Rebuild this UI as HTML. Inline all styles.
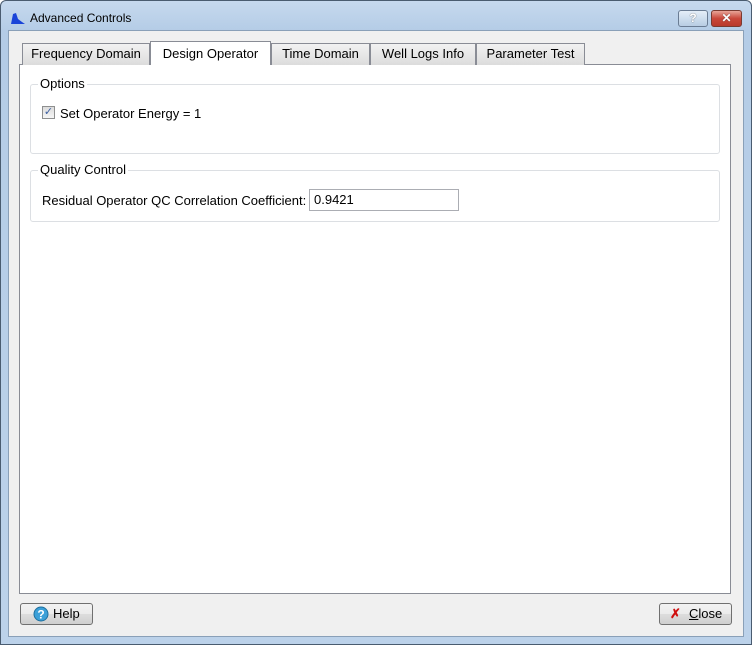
<!DOCTYPE html><html><head><style>
*{margin:0;padding:0;box-sizing:border-box}
body{width:752px;height:645px;overflow:hidden;font-family:"Liberation Sans",sans-serif;font-size:13px;color:#000;background:#fff}
.a{position:absolute}
.win{left:0;top:0;width:752px;height:645px;border:1px solid #4a5c70;border-radius:6px 6px 0 0;background:linear-gradient(#c6d9ee,#b4cce6 30px,#bcd2ea);}
.client{left:8px;top:30px;width:736px;height:607px;background:#f0f0f0;border:1px solid #8aa0b8}
.tab{top:43px;height:22px;background:linear-gradient(#f2f2f2,#dcdcdc);border:1px solid #898c95;border-bottom:none;text-align:center;line-height:20px}
.pane{left:19px;top:64px;width:712px;height:530px;background:#fff;border:1px solid #898c95}
.grp{border:1px solid #dcdfe3;border-radius:3px}
.lg{background:#fff;padding:0 2px}
.btn{height:22px;border:1px solid #707070;border-radius:3px;background:linear-gradient(#f2f2f2,#ebebeb 50%,#dddddd 51%,#cfcfcf);line-height:20px}
</style></head><body>
<div class="a win"></div>
<svg class="a" style="left:10px;top:11px" width="16" height="14"><path d="M1 13 L3 3 L6 2 L8 8 L12 11 L15 13Z" fill="#1a44d8"/></svg>
<div class="a" style="left:30px;top:11px;font-size:12px">Advanced Controls</div>
<div class="a" style="left:678px;top:10px;width:30px;height:17px;border:1px solid #6a7c93;border-radius:3px;background:linear-gradient(#e4eef8,#b8cde3);text-align:center;font-size:12px;font-weight:bold;color:#fff;line-height:15px;text-shadow:0 0 1px #333">?</div>
<div class="a" style="left:711px;top:10px;width:31px;height:17px;border:1px solid #7a3a30;border-radius:3px;background:linear-gradient(#e8a598,#c9473a 50%,#b83a2c);text-align:center;font-size:12px;font-weight:bold;color:#fff;line-height:15px;text-shadow:0 0 1px #333">✕</div>
<div class="a client"></div>
<div class="a pane"></div>
<div class="a tab" style="left:22px;width:128px">Frequency Domain</div>
<div class="a tab" style="left:150px;top:41px;height:24px;width:121px;background:#fff;line-height:24px">Design Operator</div>
<div class="a tab" style="left:271px;width:99px">Time Domain</div>
<div class="a tab" style="left:370px;width:106px">Well Logs Info</div>
<div class="a tab" style="left:476px;width:109px">Parameter Test</div>
<div class="a grp" style="left:30px;top:84px;width:690px;height:70px"></div>
<div class="a lg" style="left:38px;top:76px">Options</div>
<div class="a" style="left:42px;top:106px;width:13px;height:13px;border:1px solid #8e8f8f;background:linear-gradient(#dcdcdc,#f6f6f6);font-size:11px;line-height:11px;text-align:center;color:#3c5fa0">✓</div>
<div class="a" style="left:60px;top:106px">Set Operator Energy = 1</div>
<div class="a grp" style="left:30px;top:170px;width:690px;height:52px"></div>
<div class="a lg" style="left:38px;top:162px">Quality Control</div>
<div class="a" style="left:42px;top:193px">Residual Operator QC Correlation Coefficient:</div>
<div class="a" style="left:309px;top:189px;width:150px;height:22px;border:1px solid #abadb3;background:#fff;padding-left:4px;line-height:20px">0.9421</div>
<div class="a btn" style="left:20px;top:603px;width:73px"><svg class="a" style="left:12px;top:2px" width="16" height="16"><circle cx="8" cy="8" r="7" fill="#3ca0d8" stroke="#1e6f9e"/><text x="8" y="12.5" font-size="12" text-anchor="middle" fill="#fff" font-family="Liberation Sans" font-weight="bold">?</text></svg><span class="a" style="left:32px;top:0">Help</span></div>
<div class="a btn" style="left:659px;top:603px;width:73px"><span class="a" style="left:10px;top:0;color:#d01010;font-weight:bold">✗</span><span class="a" style="left:29px;top:0"><u>C</u>lose</span></div>
</body></html>
